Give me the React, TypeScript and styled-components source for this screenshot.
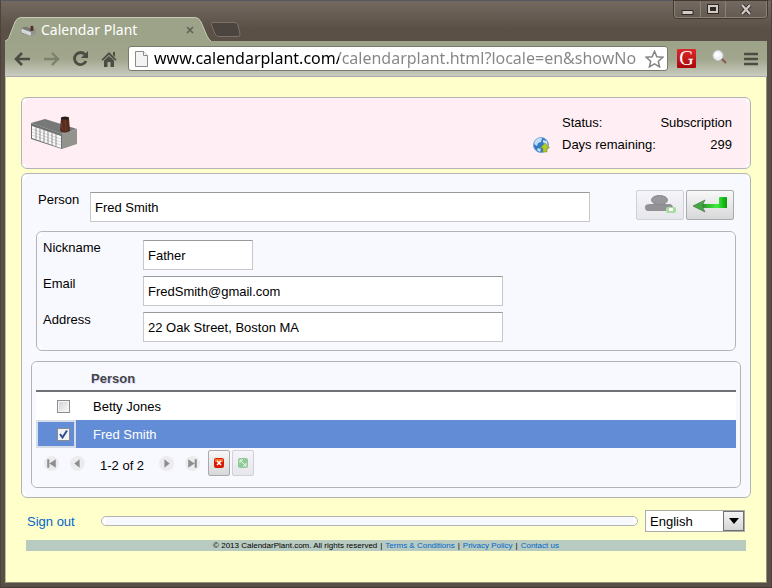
import React, { useState } from "react";
import styled, { createGlobalStyle, css } from "styled-components";

const GlobalStyle = createGlobalStyle`
  *, *::before, *::after { box-sizing: border-box; }
  body { margin: 0; font: 13px/16px "Liberation Sans", Arial, sans-serif; color: #000; }
  button, input, select { font: inherit; color: inherit; margin: 0; border-radius: 0; }
  svg { display: block; flex: none; }
  a { color: #0066cc; text-decoration: none; }
`;

const Window = styled.div`
  min-height: 100vh;
  display: flex;
  flex-direction: column;
  padding: 0 4px 4px;
  background: linear-gradient(#736960, #5b5046 28px, #5a4f46 60px, #5a4f46);
  border-top: 1px solid #55585f;
  border-left: 1px solid #4c443c;
  border-right: 1px solid #4c443c;
  border-bottom: 1px solid #443c34;
`;

const TitleBar = styled.header`
  height: 40px;
  display: flex;
  justify-content: space-between;
  align-items: flex-start;
`;

const TabStrip = styled.div`
  height: 40px;
  display: flex;
  align-items: flex-end;
`;

const Tab = styled.div`
  position: relative;
  width: 206px;
  height: 24px;
  display: flex;
  align-items: center;
  gap: 5px;
  padding: 0 17px 0 16px;
  color: #fff;
  font: 14px/22px "Noto Sans", sans-serif;
`;

const TabShape = styled.svg`
  position: absolute;
  inset: 0;
`;

const TabTitle = styled.span`
  position: relative;
  flex: 1;
  padding-top: 2px;
  white-space: nowrap;
`;

const PlainButton = styled.button`
  position: relative;
  display: flex;
  align-items: center;
  justify-content: center;
  padding: 0;
  border: 0;
  background: none;
`;

const NewTab = styled(PlainButton)`
  height: 24px;
  align-items: flex-start;
  padding-top: 5px;
`;

const Favicon = styled.span`
  position: relative;
  padding-top: 3px;
`;

const WindowButtons = styled.div`
  display: flex;
  height: 17px;
  border: 1px solid #8a8178;
  border-top: 0;
  border-radius: 0 0 4px 4px;
  box-shadow: 0 0 0 1px #41382f;
`;

const WindowButton = styled(PlainButton)<{ $wide?: boolean }>`
  width: ${(p) => (p.$wide ? 41 : 25)}px;
  & + & { border-left: 1px solid #8a8178; }
`;

const Toolbar = styled.nav`
  height: 36px;
  display: flex;
  align-items: center;
  gap: 9px;
  padding: 0 9px 0 7px;
  background: linear-gradient(#9da388, #a1a68d 18px, #c9ccbf);
  border-bottom: 1px solid #a9a9b0;
`;

const NavButtons = styled.div`
  display: flex;
  gap: 9px;
`;

const NavButton = styled(PlainButton)`
  width: 20px;
  height: 20px;
`;

const AddressBar = styled.div`
  flex: 1;
  min-width: 0;
  height: 25px;
  display: flex;
  align-items: center;
  gap: 6px;
  padding: 0 3px 0 6px;
  background: #fff;
  border: 1px solid #777b6b;
  border-radius: 3px;
`;

const AddressInput = styled.input`
  flex: 1;
  min-width: 0;
  height: 23px;
  padding: 0;
  border: 0;
  outline: 0;
  font: 16px/23px "Noto Sans", sans-serif;
  -webkit-text-fill-color: transparent;
  background: linear-gradient(90deg, #000 185px, #858585 185px);
  -webkit-background-clip: text;
  background-clip: text;
`;

const Extensions = styled.div`
  display: flex;
  align-items: center;
  gap: 15px;
`;

const GBadge = styled(PlainButton)`
  width: 19px;
  height: 19px;
  border-radius: 1px;
  background: linear-gradient(#dc2a2c, #a8080b);
  color: #fff;
  font: 20px/19px "Liberation Serif", serif;
`;

const Page = styled.main`
  flex: 1;
  padding: 20px 15px;
  background: #ffffcc;
  border: 1px solid #8f9478;
  border-top: 0;
  border-left-color: #b9bc98;
`;

const corner = "linear-gradient(#fff, #fff)";
const Panel = styled.section<{ $tone?: string }>`
  border: 1px solid #b4b4b8;
  border-radius: 6px;
  background:
    ${corner} 0 0 / 4px 4px no-repeat,
    ${corner} 100% 0 / 4px 4px no-repeat,
    ${corner} 0 100% / 4px 4px no-repeat,
    ${corner} 100% 100% / 4px 4px no-repeat,
    ${(p) => p.$tone ?? "#f8f9ff"};
`;

const Banner = styled(Panel)`
  min-height: 72px;
  display: flex;
  justify-content: space-between;
  align-items: center;
  padding: 0 18px 0 8px;
  margin-bottom: 4px;
`;

const StatusGrid = styled.dl`
  display: grid;
  grid-template-columns: 17px 104px 72px;
  column-gap: 3px;
  row-gap: 6px;
  margin: 0;
  padding-top: 2px;
  align-items: center;
  dt { margin-left: 9px; white-space: nowrap; }
  dd { margin: 0; text-align: right; }
`;

const MainPanel = styled(Panel)`
  padding: 16px 9px 9px;
`;

const PersonRow = styled.div`
  display: flex;
  align-items: flex-start;
  padding: 0 7px;
  margin-bottom: 9px;
`;

const FieldLabel = styled.label<{ $width: number }>`
  width: ${(p) => p.$width}px;
  flex: none;
`;

const TextInput = styled.input<{ $width: number }>`
  width: ${(p) => p.$width}px;
  min-width: 0;
  height: 30px;
  padding: 1px 4px 0;
  background: #fff;
  border: 1px solid #c8c8c8;
  border-top-color: #999;
  outline: 0;
`;

const PersonField = styled.div`
  flex: 1;
  display: flex;
  padding-top: 2px;
`;

const grey = css`
  border: 1px solid #aaaaad;
  border-radius: 2px;
  background: linear-gradient(#f8f8f8, #d8d8da);
  &:disabled { border-color: #d0d0d6; background: linear-gradient(#f4f4fa, #e6e6eb); }
`;

const Actions = styled.div`
  display: flex;
  gap: 2px;
`;

const ActionButton = styled(PlainButton)`
  width: 48px;
  height: 30px;
  ${grey}
`;

const SmallButton = styled(PlainButton)`
  width: 22px;
  height: 26px;
  ${grey}
`;

const DetailsPanel = styled(Panel)`
  display: grid;
  gap: 6px;
  padding: 8px 6px;
  margin: 0 5px 10px;
`;

const DetailRow = styled.div`
  display: flex;
`;

const ListPanel = styled(Panel)`
  padding: 5px 4px 11px;
`;

const PeopleTable = styled.table`
  width: 100%;
  border-collapse: separate;
  border-spacing: 0;
`;

const HeadCell = styled.th`
  height: 25px;
  padding: 0;
  text-align: left;
  color: #444;
  text-shadow: 1px 1px 0 #dfdfff;
  border-bottom: 2px solid #6f7177;
  &:first-child { width: 40px; }
  & + & { padding-left: 15px; }
`;

const PersonTr = styled.tr<{ $selected: boolean }>`
  background: ${(p) => (p.$selected ? "#628cd5" : "#fff")};
  color: ${(p) => (p.$selected ? "#fff" : "#000")};
  td { height: 28px; padding: 0; }
  td + td { padding: 2px 0 0 17px; }
  td:first-child { border: 2px solid ${(p) => (p.$selected ? "#d7dde8" : "#fff")}; }
`;

const TickBox = styled.input`
  appearance: none;
  display: block;
  width: 13px;
  height: 13px;
  margin: 0 0 0 19px;
  border: 1px solid #8b8c90;
  background: linear-gradient(135deg, #cfd1d4, #fafafa);
  box-shadow: inset 0 0 0 1px #f4f4f4;
  &:checked {
    background:
      url("data:image/svg+xml,%3Csvg xmlns='http://www.w3.org/2000/svg' viewBox='0 0 11 11'%3E%3Cpath d='M2 5l2.5 3.5L9 1.5' fill='none' stroke='%23304e8e' stroke-width='2'/%3E%3C/svg%3E"),
      #f2f3f6;
  }
`;

const Pager = styled.div`
  display: flex;
  align-items: center;
  padding: 2px 8px 0;
  gap: 2px;
`;

const PageButtons = styled.div`
  display: flex;
  gap: 11px;
`;

const RoundButton = styled(PlainButton)`
  width: 15px;
  height: 15px;
  border-radius: 8px;
  background: #ececee;
`;

const PageRange = styled.span`
  padding: 5px 13px 0;
  white-space: nowrap;
`;

const RowTools = styled.div`
  display: flex;
  gap: 2px;
  padding-left: 6px;
`;

const BottomRow = styled.div`
  display: flex;
  align-items: center;
  padding: 12px 6px 8px;
`;

const SignOut = styled.a`
  width: 74px;
  padding-top: 1px;
`;

const StatusBar = styled(Panel)`
  flex: 1;
  height: 10px;
  margin-right: 7px;
`;

const SelectBox = styled.div`
  position: relative;
  width: 100px;
`;

const Language = styled.select`
  appearance: none;
  display: block;
  width: 100%;
  height: 22px;
  padding: 1px 4px 0;
  background: #fff;
  border: 1px solid #aaa;
`;

const SelectArrow = styled.span`
  position: absolute;
  top: 1px;
  right: 1px;
  width: 21px;
  height: 20px;
  display: flex;
  align-items: center;
  justify-content: center;
  border: 1px solid #707070;
  background: linear-gradient(#f4f4f4, #d5d5d5);
  pointer-events: none;
`;

const Legal = styled.footer`
  display: flex;
  justify-content: center;
  gap: 3px;
  margin: 0 5px;
  background: #b8cbc0;
  font-size: 8px;
  line-height: 11px;
  white-space: nowrap;
`;

const Factory = ({ width, height }: { width: number; height: number }) => (
  <svg width={width} height={height} viewBox="0 0 48 34">
    <path d="M1 7L15 3l32 10-15 5z" fill="#777978" />
    <path d="M1 7l31 11v15L1 23z" fill="#6f7170" />
    <path d="M32 18l15-5v15l-15 5z" fill="#92938d" />
    <path d="M2 10l29 10v12L2 22z" fill="#fafafa" />
    <path
      d="M2 13l29 10M2 16l29 10M2 19l29 10"
      stroke="#c4c5c4"
      strokeWidth=".7"
      fill="none"
    />
    <path d="M6 11v13M10 12v13M14 14v12M18 15v13M22 16v13M26 18v12" stroke="#8c8d8c" fill="none" />
    <path d="M31 2h8l1 13q-5 3-10 0z" fill="#552c22" />
    <path d="M31 7l2 7M35 4l1 11" stroke="#743b2b" />
    <ellipse cx="35" cy="2" rx="4" ry="1.5" fill="#251e1b" />
  </svg>
);

const BackArrow = ({ color }: { color: string }) => (
  <svg width="17" height="16" viewBox="0 0 17 16">
    <path d="M8 2L2 8l6 6M2.500 8H16" fill="none" stroke={color} strokeWidth="2.600" />
  </svg>
);

const ForwardArrow = ({ color }: { color: string }) => (
  <svg width="17" height="16" viewBox="0 0 17 16">
    <path d="M9 2l6 6-6 6M14.500 8H1" fill="none" stroke={color} strokeWidth="2.400" />
  </svg>
);

const PageIcon = ({ kind }: { kind: "first" | "prev" | "next" | "last" }) => {
  const d = {
    first: "M3 3h2v8H3zM11 3v8L5 7z",
    prev: "M9 3v8L4 7z",
    next: "M5 3v8l5-4z",
    last: "M3 3v8l6-4zM9 3h2v8H9z",
  }[kind];
  return (
    <svg width="15" height="15" viewBox="0 0 14 14">
      <path d={d} fill="#8e8e92" />
    </svg>
  );
};

const people = ["Betty Jones", "Fred Smith"];

const details = [
  { id: "nickname", label: "Nickname", value: "Father", width: 110 },
  { id: "email", label: "Email", value: "FredSmith@gmail.com", width: 360 },
  { id: "address", label: "Address", value: "22 Oak Street, Boston MA", width: 360 },
];

export default function App() {
  const [selected, setSelected] = useState("Fred Smith");
  return (
    <>
      <GlobalStyle />
      <Window>
        <TitleBar>
          <TabStrip>
            <Tab>
              <TabShape width="206" height="24" viewBox="0 0 206 24">
                <path
                  d="M0 24C3 23 4 21 5 18L10 5Q12 .5 16 .5H190Q194 .5 196 5L202 19Q204 23 206 24z"
                  fill="#9da388"
                />
                <path
                  d="M0 24C3 23 4 21 5 18L10 5Q12 .5 16 .5H190Q194 .5 196 5L202 19Q204 23 206 24"
                  fill="none"
                  stroke="#c6cab8"
                />
              </TabShape>
              <Favicon><Factory width={15} height={12} /></Favicon>
              <TabTitle>Calendar Plant</TabTitle>
              <PlainButton aria-label="Close tab">
                <svg width="8" height="10" viewBox="0 0 8 10">
                  <path d="M1 3l6 6M7 3L1 9" stroke="#5c5f50" strokeWidth="1.500" />
                </svg>
              </PlainButton>
            </Tab>
            <NewTab aria-label="New tab">
              <svg width="30" height="15" viewBox="0 0 30 15">
                <path d="M1 .5H23Q26 .5 27 3L29 12Q29.500 14.500 27 14.500H8Q5 14.500 4 12L.5 3Q0 .5 1 .5z" fill="#4c443e" stroke="#7b7269" />
              </svg>
            </NewTab>
          </TabStrip>
          <WindowButtons>
            <WindowButton aria-label="Minimize">
              <svg width="13" height="14" viewBox="0 0 13 14">
                <path d="M1 8.500h11v4H1z" fill="#d0cbc7" stroke="#302923" />
              </svg>
            </WindowButton>
            <WindowButton aria-label="Maximize">
              <svg width="12" height="12" viewBox="0 0 12 12">
                <path d="M0 1h12v10H0z" fill="#302923" />
                <path d="M2 3h8v6H2z" fill="none" stroke="#d0cbc7" strokeWidth="2" />
              </svg>
            </WindowButton>
            <WindowButton $wide aria-label="Close">
              <svg width="12" height="11" viewBox="0 0 12 11">
                <path d="M2 1l8 9M10 1L2 10" stroke="#302923" strokeWidth="4" />
                <path d="M2 1l8 9M10 1L2 10" stroke="#d0cbc7" strokeWidth="2.200" />
              </svg>
            </WindowButton>
          </WindowButtons>
        </TitleBar>

        <Toolbar>
          <NavButtons>
            <NavButton aria-label="Back"><BackArrow color="#4b4d43" /></NavButton>
            <NavButton aria-label="Forward"><ForwardArrow color="#7d826c" /></NavButton>
            <NavButton aria-label="Reload">
              <svg width="17" height="17" viewBox="0 0 17 17">
                <path d="M13 4.500A6 6 0 1 0 14 11" fill="none" stroke="#4b4d43" strokeWidth="2.800" />
                <path d="M16 1v7H9z" fill="#4b4d43" />
              </svg>
            </NavButton>
            <NavButton aria-label="Home">
              <svg width="16" height="16" viewBox="0 0 16 16">
                <path d="M8 1l7.500 7.500-1.200 1.200L8 3.800 1.700 9.700.5 8.500zM12 1h2v5l-2-2z" fill="#4b4d43" />
                <path d="M8 5l5 4.500V16H9.500v-5h-3v5H3V9.500z" fill="#4b4d43" />
              </svg>
            </NavButton>
          </NavButtons>
          <AddressBar>
            <svg width="13" height="16" viewBox="0 0 13 16">
              <path d="M.5 .5h8l4 4v11H.5z" fill="#f3f3f3" stroke="#8a8a8a" />
              <path d="M8.500 .5v4h4" fill="#fff" stroke="#8a8a8a" />
            </svg>
            <AddressInput aria-label="Address" defaultValue="www.calendarplant.com/calendarplant.html?locale=en&showNo" />
            <svg width="19" height="18" viewBox="0 0 19 18">
              <path
                d="M9.500 1.200l2.300 5.500 6 .5-4.500 4 1.300 5.700-5.100-3-5.100 3 1.300-5.700-4.500-4 6-.5z"
                fill="#fff"
                stroke="#858585"
                strokeWidth="1.500"
              />
            </svg>
          </AddressBar>
          <Extensions>
            <GBadge aria-label="G extension">G</GBadge>
            <PlainButton aria-label="Search">
              <svg width="18" height="18" viewBox="0 0 18 18">
                <path d="M10 8l5 5" stroke="#8a5848" strokeWidth="2" />
                <circle cx="7" cy="5.500" r="5" fill="#eef1f5" stroke="#c5cbd3" />
                <circle cx="6" cy="4.500" r="2.500" fill="#fff" />
              </svg>
            </PlainButton>
            <PlainButton aria-label="Menu">
              <svg width="14" height="14" viewBox="0 0 14 14">
                <path d="M1 2h12M1 7h12M1 12h12" stroke="#4b4d43" strokeWidth="2.600" strokeLinecap="round" />
              </svg>
            </PlainButton>
          </Extensions>
        </Toolbar>

        <Page>
          <Banner $tone="#ffeff4">
            <Factory width={48} height={34} />
            <StatusGrid>
              <span />
              <dt>Status:</dt>
              <dd>Subscription</dd>
              <svg width="17" height="17" viewBox="0 0 17 17">
                <circle cx="8" cy="8" r="7.500" fill="#3579c4" stroke="#6fa3d8" />
                <path d="M2 4q3-4 7-3L8 5 5 6 4 9 1 7zM10 3l4 1 1 5-3-1-2-3zM5 11l3 1-1 3-3-2z" fill="#c5def4" />
                <path d="M12 6l4.500 5H14v4h-4v-4H7.500z" fill="#b5c928" stroke="#84961b" strokeWidth=".6" />
              </svg>
              <dt>Days remaining:</dt>
              <dd>299</dd>
            </StatusGrid>
          </Banner>

          <MainPanel>
            <PersonRow>
              <PersonField>
                <FieldLabel htmlFor="person" $width={52}>Person</FieldLabel>
                <TextInput id="person" $width={500} defaultValue="Fred Smith" />
              </PersonField>
              <Actions>
                <ActionButton disabled aria-label="Add person">
                  <svg width="32" height="20" viewBox="0 0 32 20">
                    <path d="M1 12q0-3 5-3h4l2-2h7l2 2h4q4 0 4 4 0 3-4 3H4q-3 0-3-4z" fill="#919196" />
                    <ellipse cx="15.500" cy="5" rx="8" ry="4.500" fill="#98989d" stroke="#87878c" />
                    <rect x="22" y="12" width="10" height="6" rx="2" fill="#a9dba2" />
                    <rect x="25" y="13" width="4" height="3" rx="1" fill="#fff" />
                  </svg>
                </ActionButton>
                <ActionButton aria-label="Save">
                  <svg width="36" height="18" viewBox="0 0 36 18">
                    <defs>
                      <linearGradient id="returnGreen" x1="0" x2="1">
                        <stop offset="0" stopColor="#2c8f2c" />
                        <stop offset=".6" stopColor="#3df03d" />
                        <stop offset="1" stopColor="#0a9a0a" />
                      </linearGradient>
                    </defs>
                    <path d="M10 8H27V2q0-1 1-1h6q1 0 1 1v10H10z" fill="url(#returnGreen)" />
                    <path d="M1 10L13 4 11 8v4l2 4z" fill="#42a742" stroke="#3a6b3a" strokeWidth=".6" />
                  </svg>
                </ActionButton>
              </Actions>
            </PersonRow>

            <DetailsPanel>
              {details.map((f) => (
                <DetailRow key={f.id}>
                  <FieldLabel htmlFor={f.id} $width={100}>{f.label}</FieldLabel>
                  <TextInput id={f.id} $width={f.width} defaultValue={f.value} />
                </DetailRow>
              ))}
            </DetailsPanel>

            <ListPanel>
              <PeopleTable>
                <thead>
                  <tr>
                    <HeadCell aria-label="Selected" />
                    <HeadCell>Person</HeadCell>
                  </tr>
                </thead>
                <tbody>
                  {people.map((name) => (
                    <PersonTr key={name} $selected={name === selected}>
                      <td>
                        <TickBox
                          type="checkbox"
                          aria-label={name}
                          checked={name === selected}
                          onChange={() => setSelected(name)}
                        />
                      </td>
                      <td>{name}</td>
                    </PersonTr>
                  ))}
                </tbody>
              </PeopleTable>
              <Pager>
                <PageButtons>
                  <RoundButton aria-label="First page"><PageIcon kind="first" /></RoundButton>
                  <RoundButton aria-label="Previous page"><PageIcon kind="prev" /></RoundButton>
                </PageButtons>
                <PageRange>1-2 of 2</PageRange>
                <PageButtons>
                  <RoundButton aria-label="Next page"><PageIcon kind="next" /></RoundButton>
                  <RoundButton aria-label="Last page"><PageIcon kind="last" /></RoundButton>
                </PageButtons>
                <RowTools>
                  <SmallButton aria-label="Delete">
                    <svg width="10" height="10" viewBox="0 0 10 10">
                      <rect width="10" height="10" rx="2" fill="#d71a06" />
                      <path d="M1 1h8v3H1z" fill="#f8722c" />
                      <path d="M3 3l4 4M7 3L3 7" stroke="#fff" strokeWidth="1.500" />
                    </svg>
                  </SmallButton>
                  <SmallButton disabled aria-label="Refresh">
                    <svg width="10" height="10" viewBox="0 0 10 10">
                      <rect width="10" height="10" rx="2" fill="#8fcb98" />
                      <path d="M2 5V2h3M2 2l6 6M8 5v3H5" fill="none" stroke="#e9f7ea" />
                    </svg>
                  </SmallButton>
                </RowTools>
              </Pager>
            </ListPanel>
          </MainPanel>

          <BottomRow>
            <SignOut href="#signout">Sign out</SignOut>
            <StatusBar />
            <SelectBox>
              <Language aria-label="Language" defaultValue="English">
                <option>English</option>
              </Language>
              <SelectArrow>
                <svg width="10" height="6" viewBox="0 0 10 6">
                  <path d="M0 0h10L5 6z" fill="#000" />
                </svg>
              </SelectArrow>
            </SelectBox>
          </BottomRow>
          <Legal>
            <span>© 2013 CalendarPlant.com. All rights reserved</span>
            <span>|</span>
            <a href="#terms">Terms &amp; Conditions</a>
            <span>|</span>
            <a href="#privacy">Privacy Policy</a>
            <span>|</span>
            <a href="#contact">Contact us</a>
          </Legal>
        </Page>
      </Window>
    </>
  );
}
